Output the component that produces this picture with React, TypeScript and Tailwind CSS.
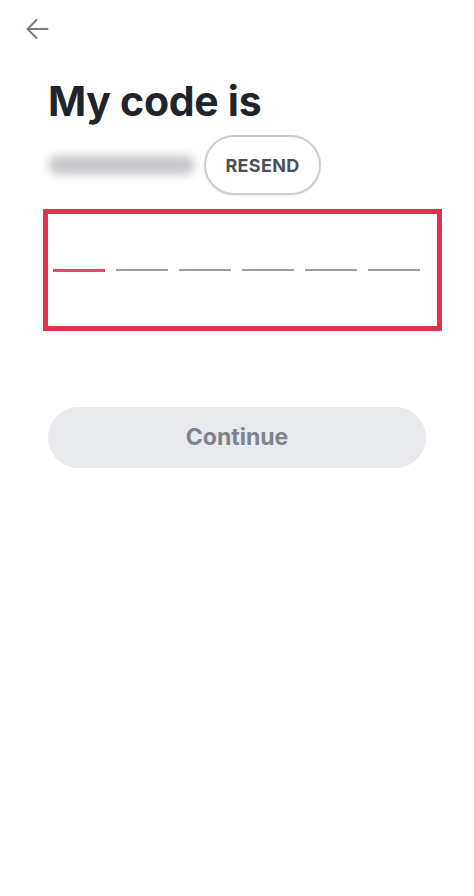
import React from "react";

export default function App() {
  const dashes = [0, 1, 2, 3, 4, 5];
  return (
    <div className="w-[474px] h-[896px] bg-white relative overflow-hidden" style={{ fontFamily: "Inter, 'Open Sans', sans-serif" }}>
      <div className="pl-[26px] pt-[18px]">
        <svg width="23" height="22" viewBox="0 0 23 22" fill="none" stroke="#737a84" strokeWidth="2" strokeLinecap="round" strokeLinejoin="round">
          <path d="M21.5 11H2" />
          <path d="M10.5 2L1.5 11l9 9" />
        </svg>
      </div>
      <div className="px-[48px]">
        <h1 className="mt-[37px] text-[41px] leading-[48px] font-bold text-[#21252b] tracking-[-0.3px]">My code is</h1>
        <div className="mt-[10px] flex items-center gap-[9px]">
          <div className="w-[147px] h-[20px] rounded-full bg-[#c9cacd] blur-[4px]" />
          <div className="w-[117px] h-[60px] rounded-full border-[2px] border-[#c9ccd1] shadow-[0_1px_2px_rgba(0,0,0,0.08)] flex items-center justify-center text-[18px] font-bold text-[#4b5058] tracking-[0.3px]">
            RESEND
          </div>
        </div>
      </div>
      <div className="ml-[43px] mt-[14px] w-[399px] h-[122px] border-[5px] border-[#e0334b] flex items-center pl-[5px] gap-[11px]">
        {dashes.map((i) => (
          <div
            key={i}
            className={i === 0 ? "w-[52px] h-[3px] bg-[#e04b5e]" : "w-[52px] h-[2px] bg-[#9a9ea4]"}
          />
        ))}
      </div>
      <div className="mx-[48px] mt-[76px] h-[61px] rounded-full bg-[#e9eaee] flex items-center justify-center text-[23px] font-bold text-[#7d838c]">
        Continue
      </div>
    </div>
  );
}
